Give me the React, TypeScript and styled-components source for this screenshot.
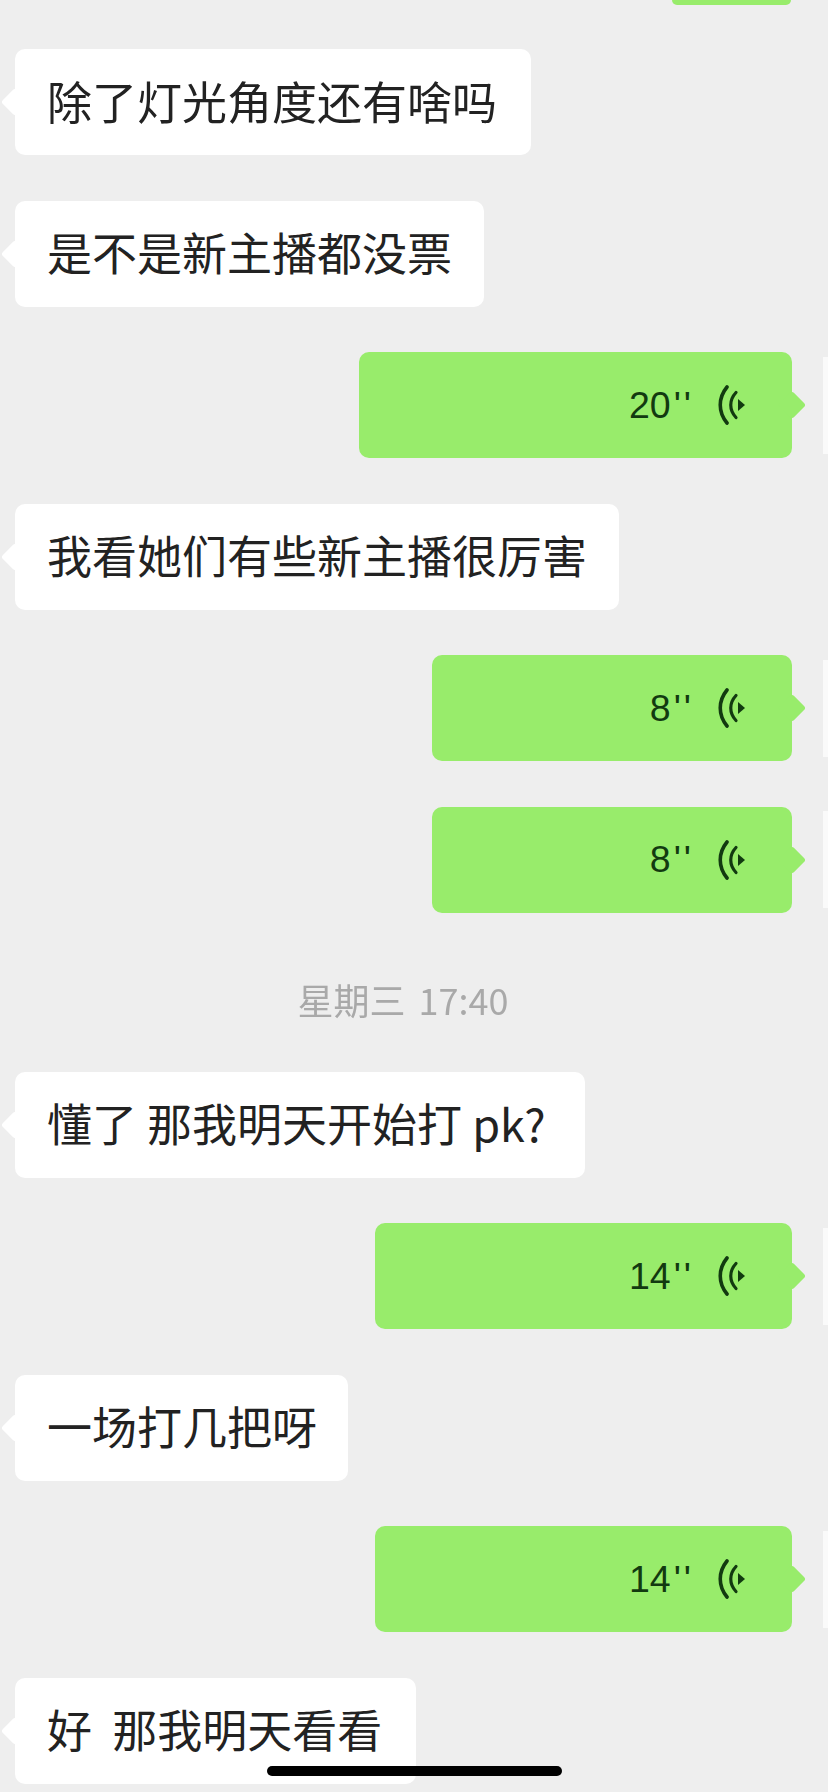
import styled, { createGlobalStyle } from "styled-components";

const GlobalStyle = createGlobalStyle`
  html, body {
    margin: 0;
    padding: 0;
    background: #eeeeee;
  }
`;

type Message =
  | { kind: "text"; text: string; width: number }
  | { kind: "voice"; seconds: number; width: number }
  | { kind: "time"; text: string };

const messages: Message[] = [
  { kind: "text", text: "除了灯光角度还有啥吗", width: 516 },
  { kind: "text", text: "是不是新主播都没票", width: 469 },
  { kind: "voice", seconds: 20, width: 433 },
  { kind: "text", text: "我看她们有些新主播很厉害", width: 604 },
  { kind: "voice", seconds: 8, width: 360 },
  { kind: "voice", seconds: 8, width: 360 },
  { kind: "time", text: "星期三 17:40" },
  { kind: "text", text: "懂了 那我明天开始打 pk?", width: 570 },
  { kind: "voice", seconds: 14, width: 417 },
  { kind: "text", text: "一场打几把呀", width: 333 },
  { kind: "voice", seconds: 14, width: 417 },
  { kind: "text", text: "好  那我明天看看", width: 401 },
];

const VoiceIcon = () => (
  <svg width="28" height="40" viewBox="0 0 28 40" fill="none">
    <path
      d="M10 2C1 13 1 27 10 38"
      stroke="#123a10"
      strokeWidth="3.6"
      strokeLinecap="round"
    />
    <path
      d="M19 7.5C12 15 12 25 19 32.5"
      stroke="#123a10"
      strokeWidth="3.2"
      strokeLinecap="round"
    />
    <path d="M21 14L28 20L21 26Z" fill="#123a10" />
  </svg>
);

export default function App() {
  return (
    <Screen>
      <GlobalStyle />
      <TopSliver />
      <Thread>
        {messages.map((message, index) => {
          if (message.kind === "time") {
            return <TimeLabel key={index}>{message.text}</TimeLabel>;
          }
          if (message.kind === "text") {
            return (
              <IncomingRow key={index}>
                <TextBubble style={{ width: message.width }}>
                  {message.text}
                </TextBubble>
              </IncomingRow>
            );
          }
          return (
            <OutgoingRow key={index}>
              <VoiceBubble style={{ width: message.width }}>
                <Duration>
                  {message.seconds}
                  <Seconds>''</Seconds>
                </Duration>
                <VoiceIcon />
              </VoiceBubble>
              <AvatarEdge />
            </OutgoingRow>
          );
        })}
      </Thread>
      <HomeIndicator />
    </Screen>
  );
}

const Screen = styled.div`
  position: relative;
  width: 828px;
  height: 1792px;
  overflow: hidden;
  background: #eeeeee;
  font-family: "Noto Sans CJK SC", "Liberation Sans", sans-serif;
`;

const TopSliver = styled.div`
  width: 119px;
  height: 5px;
  margin-left: 672px;
  background: #98ec6b;
  border-radius: 0 0 10px 10px;
`;

const Thread = styled.div`
  display: flex;
  flex-direction: column;
  gap: 45.5px;
  padding: 44px 0 0 15px;
  filter: blur(0.6px);
`;

const IncomingRow = styled.div`
  display: flex;
`;

const OutgoingRow = styled.div`
  display: flex;
  justify-content: flex-end;
  align-items: center;
  gap: 31px;
`;

const Bubble = styled.div`
  position: relative;
  box-sizing: border-box;
  height: 106px;
  display: flex;
  align-items: center;
  border-radius: 10px;
`;

const TextBubble = styled(Bubble)`
  padding: 0 0 4px 32px;
  background: #ffffff;
  color: #222222;
  font-size: 45px;
  white-space: pre;

  &::before {
    content: "";
    position: absolute;
    left: -10px;
    top: 43px;
    width: 20px;
    height: 20px;
    background: #ffffff;
    border-radius: 3px;
    transform: rotate(45deg);
  }
`;

const VoiceBubble = styled(Bubble)`
  justify-content: flex-end;
  gap: 23px;
  padding-right: 47px;
  background: #98ec6b;

  &::after {
    content: "";
    position: absolute;
    right: -10px;
    top: 43px;
    width: 20px;
    height: 20px;
    background: #98ec6b;
    border-radius: 3px;
    transform: rotate(45deg);
  }
`;

const Duration = styled.span`
  color: #123a10;
  font-family: "Liberation Sans", sans-serif;
  font-size: 37.5px;
`;

const Seconds = styled.span`
  margin-left: 3px;
  letter-spacing: 3px;
`;

const AvatarEdge = styled.div`
  flex: 0 0 5px;
  height: 97px;
  background: #fafafa;
`;

const TimeLabel = styled.div`
  margin: 17px 22px 3px -15px;
  height: 48px;
  line-height: 48px;
  text-align: center;
  color: #a9a9a9;
  font-size: 36px;
  word-spacing: 5px;
`;

const HomeIndicator = styled.div`
  position: absolute;
  left: 267px;
  top: 1766px;
  width: 295px;
  height: 10px;
  border-radius: 5px;
  background: #000000;
`;
